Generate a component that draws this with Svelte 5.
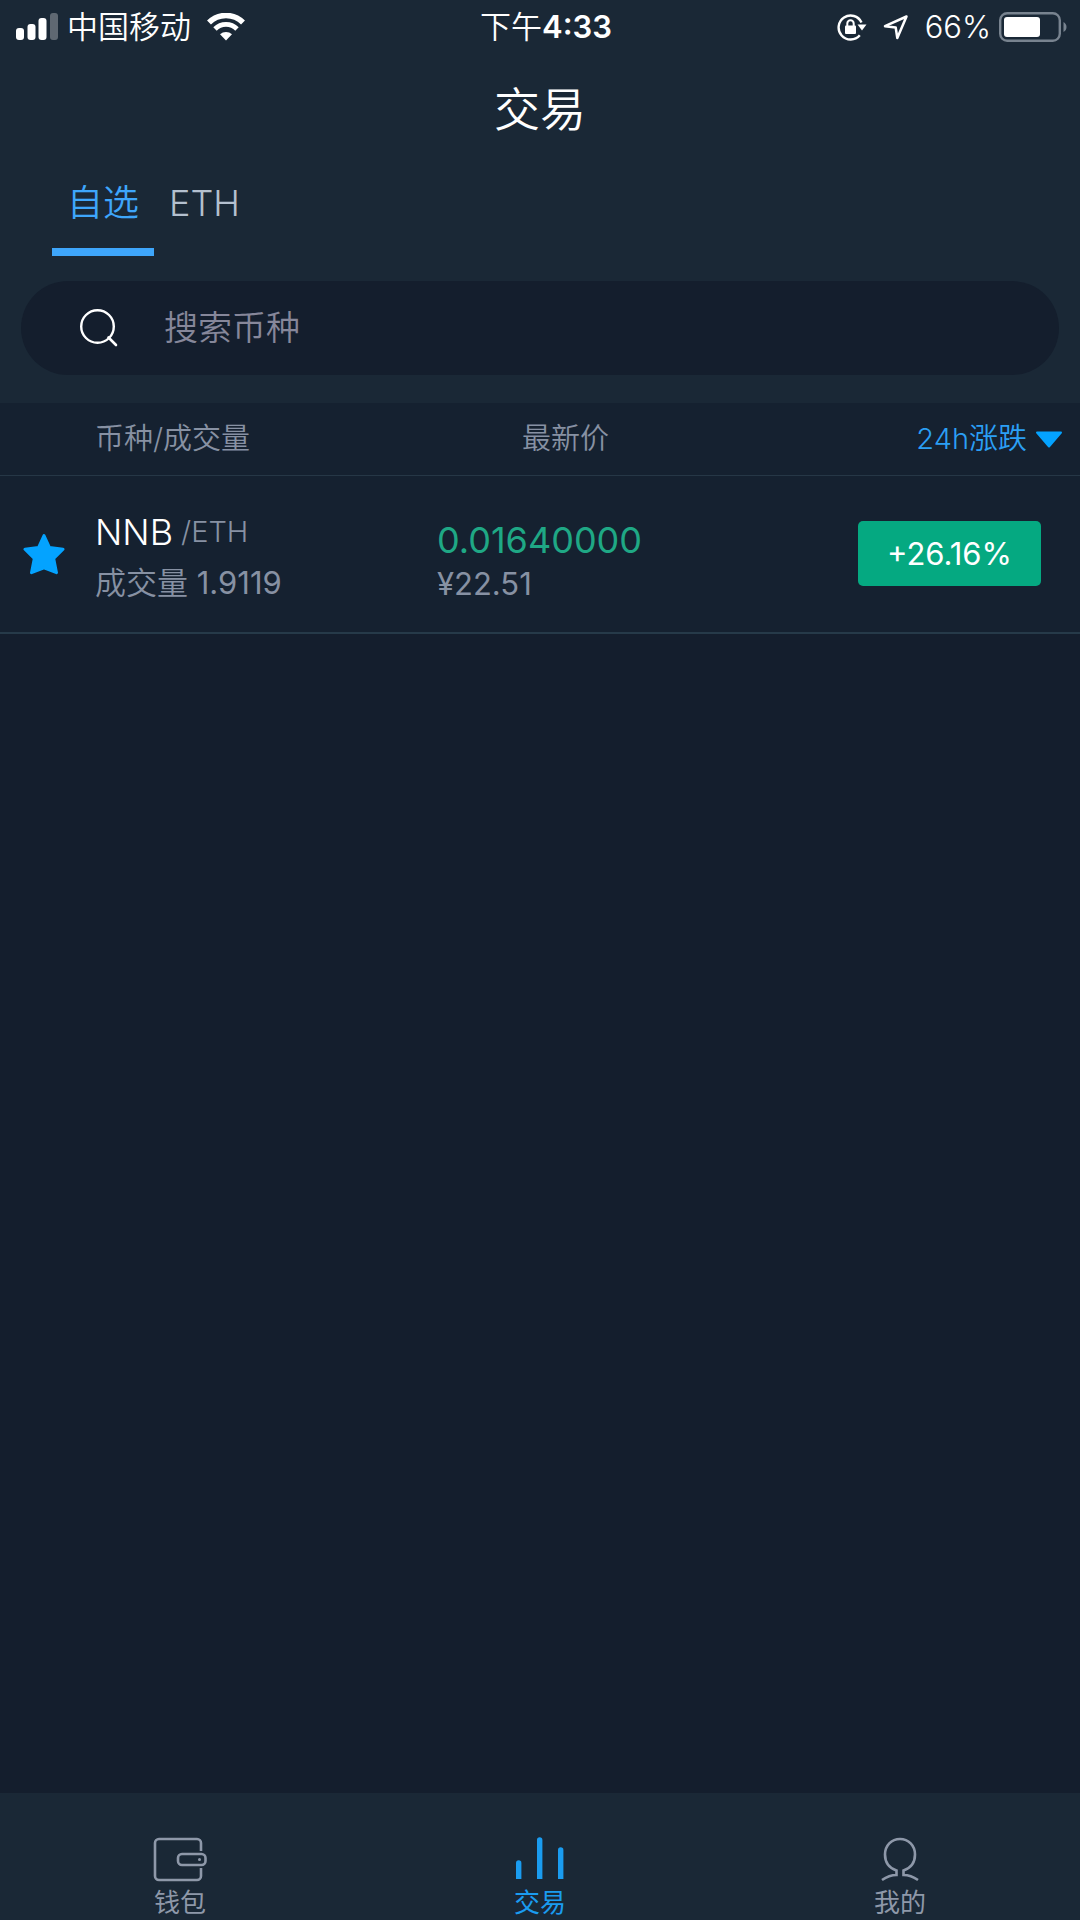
<script lang="ts">
  type Market = {
    symbol: string;
    base: string;
    volume: string;
    price: string;
    fiat: string;
    change: number;
    starred: boolean;
  };

  const tabs = ['自选', 'ETH'];
  const navItems = [
    { id: 'wallet', label: '钱包' },
    { id: 'trade', label: '交易' },
    { id: 'mine', label: '我的' }
  ];

  let activeTab = $state('自选');
  let activeNav = $state('trade');
  let keyword = $state('');
  let sortDesc = $state(true);
  let markets = $state<Market[]>([
    {
      symbol: 'NNB',
      base: 'ETH',
      volume: '1.9119',
      price: '0.01640000',
      fiat: '¥22.51',
      change: 26.16,
      starred: true
    }
  ]);

  let rows = $derived(
    markets
      .filter((m) => m.symbol.toLowerCase().includes(keyword.trim().toLowerCase()))
      .sort((a, b) => (sortDesc ? b.change - a.change : a.change - b.change))
  );

  function formatChange(value: number) {
    return `${value >= 0 ? '+' : ''}${value.toFixed(2)}%`;
  }
</script>

<div class="app">
  <header class="top">
    <div class="status">
      <div class="status-left">
        <svg class="signal" width="43" height="28" viewBox="0 0 43 28" aria-hidden="true">
          <rect x="0" y="15" width="8" height="12" rx="3" />
          <rect x="11.500" y="11" width="8" height="16" rx="3" />
          <rect x="22.500" y="5" width="8" height="22" rx="3" />
          <rect x="34" y="0" width="8" height="27" rx="3" opacity="0.3" />
        </svg>
        <span class="carrier">中国移动</span>
        <svg width="38" height="28" viewBox="0 0 38 28" fill="none" stroke="#fff" aria-hidden="true">
          <path d="M2 9.500a24 24 0 0 1 34 0" stroke-width="5.500" />
          <path d="M8 16a15.500 15.500 0 0 1 22 0" stroke-width="4.800" />
          <path d="M19 27.500l-6-6.200a8.800 8.800 0 0 1 12 0z" fill="#fff" stroke="none" />
        </svg>
      </div>
      <span class="clock">下午<b>4:33</b></span>
      <div class="status-right">
        <svg width="30" height="28" viewBox="0 0 30 28" fill="none" aria-hidden="true">
          <path d="M24.500 9.500A12 12 0 1 0 22.800 22.300" stroke="#fff" stroke-width="2.400" />
          <path d="M20.500 11.500h9l-4.500 6z" fill="#fff" />
          <rect x="8" y="12.500" width="11" height="8.500" rx="1" fill="#fff" />
          <path d="M10.300 13v-2.500a3.200 3.200 0 0 1 6.400 0V13" stroke="#fff" stroke-width="2" />
        </svg>
        <svg class="arrow" width="26" height="28" viewBox="0 0 26 28" fill="none" aria-hidden="true">
          <path
            d="M23.500 3.500L2 13.200l10.700 1.300 1.600 10.500z"
            stroke="#fff"
            stroke-width="2.500"
            stroke-linejoin="round"
          />
        </svg>
        <span>66%</span>
        <svg width="69" height="30" viewBox="0 0 69 30" fill="none" aria-hidden="true">
          <rect x="1.200" y="1.200" width="59.600" height="27.600" rx="7" stroke="#78838f" stroke-width="2.400" />
          <rect x="5" y="5" width="36" height="20" rx="3" fill="#fff" />
          <path d="M64.500 10c4 2 4 8 0 10z" fill="#78838f" />
        </svg>
      </div>
    </div>

    <h1>交易</h1>

    <div class="tabs" role="tablist">
      {#each tabs as tab}
        <button
          class="tab"
          class:active={activeTab === tab}
          role="tab"
          aria-selected={activeTab === tab}
          onclick={() => (activeTab = tab)}>{tab}</button
        >
      {/each}
    </div>

    <label class="search">
      <svg width="38" height="38" viewBox="0 0 38 38" fill="none" stroke="#fff" aria-hidden="true">
        <circle cx="17.500" cy="17.500" r="16.300" stroke-width="2.400" />
        <path d="M28.500 28.500l7.500 7.500" stroke-width="2.600" stroke-linecap="round" />
      </svg>
      <input type="text" placeholder="搜索币种" aria-label="搜索币种" bind:value={keyword} />
    </label>
  </header>

  <main>
    <table>
      <thead>
        <tr>
          <th class="col-star"></th>
          <th class="col-name">币种/成交量</th>
          <th class="col-price">最新价</th>
          <th class="col-change">
            <button class="sort" onclick={() => (sortDesc = !sortDesc)}>
              24h涨跌
              <svg class:flip={!sortDesc} width="28" height="17" viewBox="0 0 28 17" aria-hidden="true">
                <path
                  d="M2 1.500h24L14 15.500z"
                  fill="#04a3ff"
                  stroke="#04a3ff"
                  stroke-width="2"
                  stroke-linejoin="round"
                />
              </svg>
            </button>
          </th>
        </tr>
      </thead>
      <tbody>
        {#each rows as item}
          <tr>
            <td class="star-cell">
              <button class="star" aria-label="收藏" onclick={() => (item.starred = !item.starred)}>
                <svg width="42" height="42" viewBox="0 0 42 42" aria-hidden="true">
                  <path
                    d="M21 2.500l5.500 12 13.500 1.700-9.300 9.300 2.800 14.200L21 34.800 8.500 39.700l2.800-14.200L2 16.200l13.500-1.700z"
                    fill={item.starred ? '#04a3ff' : 'none'}
                    stroke="#04a3ff"
                    stroke-width="3"
                    stroke-linejoin="round"
                  />
                </svg>
              </button>
            </td>
            <td>
              <div class="pair"><span class="symbol">{item.symbol}</span>/{item.base}</div>
              <div class="sub">成交量 <span class="num">{item.volume}</span></div>
            </td>
            <td class="price-cell">
              <div class="price num">{item.price}</div>
              <div class="sub num">{item.fiat}</div>
            </td>
            <td class="change-cell">
              <span class="badge num" class:down={item.change < 0}>{formatChange(item.change)}</span>
            </td>
          </tr>
        {/each}
      </tbody>
    </table>
  </main>

  <nav>
    {#each navItems as item}
      <button
        class="nav-item"
        class:active={activeNav === item.id}
        onclick={() => (activeNav = item.id)}
      >
        <svg
          width="54"
          height="46"
          viewBox="0 0 54 46"
          fill="none"
          stroke="currentColor"
          stroke-width="2.600"
          aria-hidden="true"
        >
          {#if item.id === 'wallet'}
            <path d="M48 15V7a4 4 0 0 0-4-4H6a4 4 0 0 0-4 4v33a4 4 0 0 0 4 4h38a4 4 0 0 0 4-4v-8" />
            <rect x="25" y="18" width="27.500" height="11" rx="4" />
            <circle cx="46.500" cy="23.500" r="1.500" fill="currentColor" stroke="none" />
          {:else if item.id === 'trade'}
            <g fill="currentColor" stroke="none">
              <path d="M3 43V27a2.700 2.700 0 0 1 5.400 0v16z" />
              <path d="M24 43V4a2.700 2.700 0 0 1 5.400 0v39z" />
              <path d="M45 43V14a2.700 2.700 0 0 1 5.400 0v29z" />
            </g>
          {:else}
            <path
              d="M9 44c5-3.500 9-5 14.500-5v-4.500C16 32 12 26 12 18.500 12 9.500 18.500 3 27 3s15 6.500 15 15.500C42 26 38 32 30.500 34.500V39c5.500 0 9.500 1.500 14.500 5"
            />
          {/if}
        </svg>
        <span>{item.label}</span>
      </button>
    {/each}
  </nav>
</div>

<style>
  :global(body) {
    margin: 0;
    background: #141e2d;
  }
  .app {
    min-height: 100vh;
    display: flex;
    flex-direction: column;
    font-family: Inter, 'Noto Sans CJK SC', sans-serif;
    font-weight: 350;
    line-height: 1.2;
    color: #8791a3;
  }
  button {
    border: none;
    background: none;
    padding: 0;
    font: inherit;
    color: inherit;
    cursor: pointer;
  }
  svg {
    display: block;
    flex: none;
  }
  .num {
    font-weight: 400;
  }
  .top {
    background: #1a2836;
    padding-bottom: 28px;
  }
  .status {
    display: grid;
    grid-template-columns: 1fr auto 1fr;
    align-items: center;
    height: 54px;
    padding: 0 12px 0 16px;
    font-size: 31px;
    color: #fff;
  }
  .status-left,
  .status-right {
    display: flex;
    align-items: center;
  }
  .status-right {
    justify-content: flex-end;
  }
  .signal {
    fill: #fff;
  }
  .carrier {
    margin: 0 16px 0 8px;
  }
  .clock {
    padding-left: 8px;
  }
  .clock b {
    font-weight: 600;
  }
  .arrow {
    margin: 0 16px;
  }
  .status-right span {
    margin-right: 8px;
  }
  h1 {
    margin: 0;
    font-size: 46px;
    line-height: 110px;
    font-weight: 350;
    text-align: center;
    color: #fff;
  }
  .tabs {
    display: flex;
    padding-left: 52px;
    height: 92px;
  }
  .tab {
    padding: 0 15px 4px;
    font-size: 36px;
    color: #b4c0cf;
    border-bottom: 8px solid transparent;
  }
  .tab.active {
    color: #3ea6fb;
    border-color: #3ea6fb;
  }
  .search {
    display: flex;
    align-items: center;
    gap: 46px;
    height: 94px;
    margin: 25px 21px 0;
    padding: 0 59px;
    border-radius: 47px;
    background: #141e2d;
  }
  .search input {
    flex: 1;
    min-width: 0;
    padding: 0;
    border: none;
    outline: none;
    background: none;
    font: inherit;
    font-size: 34px;
    color: #fff;
  }
  .search input::placeholder {
    color: #86879a;
    opacity: 1;
  }
  main {
    flex: 1;
  }
  table {
    width: 100%;
    table-layout: fixed;
    border-collapse: collapse;
    background: #152130;
  }
  th,
  td {
    box-sizing: border-box;
    padding: 0;
  }
  th {
    height: 72px;
    padding-top: 2px;
    border-bottom: 1px solid #263746;
    font-size: 29px;
    font-weight: 350;
    text-align: left;
  }
  td {
    height: 158px;
    border-bottom: 2px solid #263a49;
  }
  .col-star {
    width: 95px;
  }
  .col-name {
    width: 342px;
  }
  .col-price {
    padding-left: 85px;
  }
  .col-change {
    padding-right: 17px;
  }
  .sort {
    display: flex;
    align-items: center;
    gap: 8px;
    margin-left: auto;
    color: #2b9ff5;
  }
  .flip {
    transform: rotate(180deg);
  }
  .star-cell {
    padding-left: 23px;
  }
  .star {
    display: block;
  }
  .pair {
    display: flex;
    align-items: center;
    gap: 8px;
    font-size: 29px;
    line-height: 58px;
  }
  .symbol {
    font-size: 36px;
    color: #fff;
  }
  .price-cell {
    padding-top: 16px;
  }
  .price {
    font-size: 36px;
    line-height: 44px;
    color: #1fa885;
  }
  .sub {
    font-size: 31px;
    line-height: 44px;
  }
  .change-cell {
    padding-right: 39px;
    text-align: right;
  }
  .badge {
    display: inline-block;
    min-width: 183px;
    border-radius: 5px;
    background: #05a981;
    color: #fff;
    font-size: 31px;
    line-height: 65px;
    text-align: center;
  }
  .badge.down {
    background: #d9485f;
  }
  nav {
    display: grid;
    grid-template-columns: repeat(3, 1fr);
    height: 127px;
    background: #1a2836;
  }
  .nav-item {
    display: flex;
    flex-direction: column;
    align-items: center;
    padding-top: 43px;
    font-size: 26px;
    line-height: 42px;
    font-weight: 400;
    color: #8e98a9;
  }
  .nav-item.active {
    color: #1a9cf0;
  }
</style>
